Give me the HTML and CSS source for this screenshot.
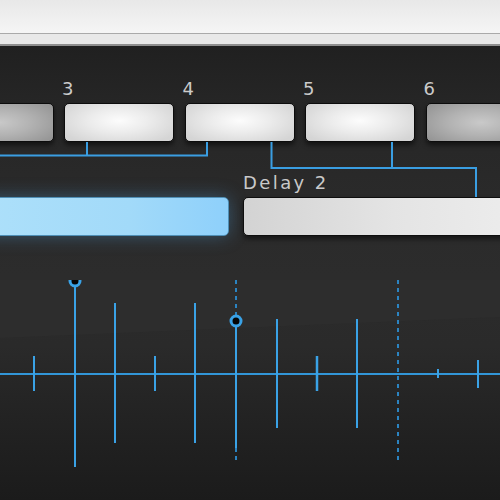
FILE: index.html
```html
<!DOCTYPE html>
<html lang="en">
<head>
  <meta charset="UTF-8" />
  <title>Delay taps</title>
  <link rel="stylesheet" href="styles.css">
</head>
<body>
  <div class="window">
    <div class="topbar"></div>
    <div class="strip"></div>

    <div class="panel">
      <div class="taps">
        <div class="tap"><span class="tap-num"></span><div class="key key-dim"></div></div>
        <div class="tap"><span class="tap-num">3</span><div class="key"></div></div>
        <div class="tap"><span class="tap-num">4</span><div class="key"></div></div>
        <div class="tap"><span class="tap-num">5</span><div class="key"></div></div>
        <div class="tap"><span class="tap-num">6</span><div class="key key-dim"></div></div>
      </div>

      <div class="delays">
        <div class="delay">
          <span class="delay-name"></span>
          <div class="bar bar-on"></div>
        </div>
        <div class="delay">
          <span class="delay-name">Delay 2</span>
          <div class="bar"></div>
        </div>
      </div>

      <svg class="graph" width="500" height="220" viewBox="0 0 500 220">
        <polygon points="0,-40 500,-40 500,37 0,58" fill="#2d2d2d" />
        <g stroke="#2b84c2" stroke-width="2" stroke-dasharray="4 4">
          <line x1="236" y1="0" x2="236" y2="182" />
          <line x1="398" y1="0" x2="398" y2="182" />
        </g>
        <line x1="0" y1="94" x2="500" y2="94" stroke="#3296d8" stroke-width="2" />
        <g stroke="#3aa2e6" stroke-width="2">
          <line x1="34" y1="76" x2="34" y2="111" />
          <line x1="75" y1="1" x2="75" y2="187" />
          <line x1="115" y1="23" x2="115" y2="163" />
          <line x1="155" y1="76" x2="155" y2="111" />
          <line x1="195" y1="23" x2="195" y2="163" />
          <line x1="236" y1="41" x2="236" y2="168" />
          <line x1="277" y1="39" x2="277" y2="148" />
          <line x1="317" y1="76" x2="317" y2="111" stroke-width="2.5" />
          <line x1="357" y1="39" x2="357" y2="148" />
          <line x1="438" y1="89" x2="438" y2="98" />
          <line x1="478" y1="80" x2="478" y2="108" />
        </g>
        <g fill="#050505" stroke="#3aa2e6" stroke-width="3">
          <circle cx="75" cy="1" r="5" />
          <circle cx="236" cy="41" r="5" />
        </g>
      </svg>

      <svg class="wires" width="500" height="160" viewBox="0 46 500 160">
        <g fill="none" stroke="#3a9ee2" stroke-width="2">
          <path d="M-2 155.5 H208 M87 142 V155.5 M207 142 V155.5" />
          <path d="M271.5 142 V168 H476 V197 M392 142 V168" />
        </g>
      </svg>
    </div>
  </div>
</body>
</html>
```

FILE: styles.css
```css
body {
  margin: 0;
  background-color: #1c1c1c;
  font-family: "DejaVu Sans", sans-serif;
  overflow: hidden;
}

.window {
  width: 500px;
  height: 500px;
  overflow: hidden;
}

.topbar {
  height: 33px;
  background: linear-gradient(#e8e8e8, #f5f5f5);
  border-bottom: 1px solid #a9a9a9;
}

.strip {
  height: 10px;
  background-color: #e8e8e8;
  border-bottom: 2px solid #8e8e8e;
}

.panel {
  position: relative;
  height: 454px;
  padding-top: 34px;
  box-sizing: border-box;
  background: linear-gradient(#202020 0px, #262626 60px, #2a2a2a 150px, #2c2c2c 230px, #2a2a2a 300px, #222222 380px, #1b1b1b 454px);
}

/* tap keys */
.taps {
  display: flex;
  gap: 10.5px;
  margin-left: -56.5px;
}

.tap {
  display: flex;
  flex-direction: column;
  width: 110px;
  flex-shrink: 0;
}

.tap-num {
  margin-left: -2px;
  height: 18px;
  font-size: 18px;
  line-height: 18px;
  letter-spacing: 2px;
  color: #cbcbcb;
}

.key {
  margin-top: 5px;
  height: 39px;
  box-sizing: border-box;
  border: 1px solid #0c0c0c;
  border-radius: 5px;
  background: radial-gradient(ellipse 60% 70% at 50% 45%, #fcfcfc 0%, #ececec 45%, #d5d5d5 100%);
  box-shadow: 0 3px 5px rgba(0, 0, 0, 0.55);
}

.key-dim {
  background: radial-gradient(ellipse 60% 70% at 50% 50%, #c9c9c9 0%, #b2b2b2 50%, #979797 100%);
}

/* delay bars */
.delays {
  display: flex;
  gap: 14px;
  margin-top: 32px;
  margin-left: -20px;
}

.delay {
  display: flex;
  flex-direction: column;
  flex-shrink: 0;
}

.delay:first-child {
  width: 249px;
}

.delay:last-child {
  width: 300px;
}

.delay-name {
  height: 18px;
  font-size: 18px;
  line-height: 18px;
  letter-spacing: 2.4px;
  color: #c9c9c9;
}

.bar {
  margin-top: 5px;
  height: 39px;
  box-sizing: border-box;
  border: 1px solid #0e0e0e;
  border-radius: 5px;
  background: linear-gradient(90deg, #d3d3d3, #e4e4e4 50%, #eeeeee);
  box-shadow: 0 3px 5px rgba(0, 0, 0, 0.5);
}

.bar-on {
  border-color: #4f8fb6;
  background: linear-gradient(90deg, #ade0fa, #a2daf9 60%, #8ed0fb);
  box-shadow: 0 0 18px rgba(80, 170, 235, 0.35);
}

/* tap graph */
.graph {
  display: block;
  margin-top: 44px;
}

.wires {
  position: absolute;
  top: 0;
  left: 0;
}
```
